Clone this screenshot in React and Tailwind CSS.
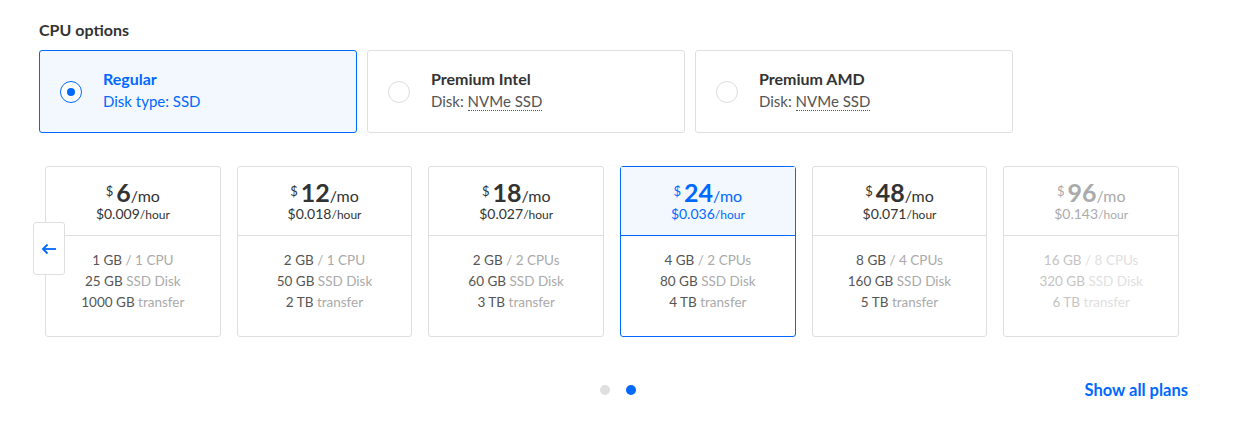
import { useState } from 'react';

const CPU_OPTIONS = [
  { id: 'regular', title: 'Regular', label: 'Disk type:', disk: 'SSD' },
  { id: 'intel', title: 'Premium Intel', label: 'Disk:', disk: 'NVMe SSD' },
  { id: 'amd', title: 'Premium AMD', label: 'Disk:', disk: 'NVMe SSD' },
];

const PLANS = [
  { price: '6', hour: '0.009', ram: '1 GB', cpu: '1 CPU', disk: '25 GB', transfer: '1000 GB' },
  { price: '12', hour: '0.018', ram: '2 GB', cpu: '1 CPU', disk: '50 GB', transfer: '2 TB' },
  { price: '18', hour: '0.027', ram: '2 GB', cpu: '2 CPUs', disk: '60 GB', transfer: '3 TB' },
  { price: '24', hour: '0.036', ram: '4 GB', cpu: '2 CPUs', disk: '80 GB', transfer: '4 TB' },
  { price: '48', hour: '0.071', ram: '8 GB', cpu: '4 CPUs', disk: '160 GB', transfer: '5 TB' },
  { price: '96', hour: '0.143', ram: '16 GB', cpu: '8 CPUs', disk: '320 GB', transfer: '6 TB', disabled: true },
];

function CpuCard({ option, selected, onSelect }) {
  return (
    <button
      type="button"
      onClick={onSelect}
      className={`flex h-[83px] w-[318px] items-center rounded-[3px] border pl-[20px] text-left ${
        selected ? 'border-[#0069ff] bg-[#f3f8ff]' : 'border-[#dfdfdf] bg-white'
      }`}
    >
      <span
        className={`flex h-[22px] w-[22px] items-center justify-center rounded-full border ${
          selected ? 'border-[#0069ff] bg-white' : 'border-[#dcdcdc] bg-white'
        }`}
      >
        {selected && <span className="h-[8px] w-[8px] rounded-full bg-[#0069ff]" />}
      </span>
      <span className="-mt-[3px] ml-[21px] flex flex-col">
        <span className={`text-[16px] font-bold leading-[22px] ${selected ? 'text-[#0069ff]' : 'text-[#333]'}`}>
          {option.title}
        </span>
        <span className={`text-[15px] leading-[22px] ${selected ? 'text-[#0069ff]' : 'text-[#555]'}`}>
          {option.label}{' '}
          <span className={selected ? '' : 'border-b border-dotted border-[#555]'}>{option.disk}</span>
        </span>
      </span>
    </button>
  );
}

function PlanCard({ plan, selected }) {
  const main = plan.disabled ? 'text-[#aaa]' : selected ? 'text-[#0069ff]' : 'text-[#333]';
  const val = plan.disabled ? 'text-[#c4c4c4]' : 'text-[#555]';
  const lbl = plan.disabled ? 'text-[#e0e0e0]' : 'text-[#aaa]';
  return (
    <div
      className={`flex h-[171px] flex-col rounded-[3px] border ${
        selected ? 'border-[#0069ff]' : 'border-[#dfdfdf]'
      }`}
    >
      <div
        className={`flex h-[69px] flex-col items-center justify-center border-b pt-[1px] ${
          selected ? 'border-[#0069ff] bg-[#f3f8ff]' : 'border-[#dfdfdf]'
        } ${main}`}
      >
        <div className="flex items-baseline leading-none">
          <span className="relative -top-[6px] mr-[3px] text-[13px]">$</span>
          <span className="text-[25px] font-bold">{plan.price}</span>
          <span className="text-[16px]">/mo</span>
        </div>
        <div className="mt-[1px] text-[14px] leading-[16px]">
          ${plan.hour}
          <span className="text-[12px]">/hour</span>
        </div>
      </div>
      <div className="flex flex-1 flex-col items-center pt-[14px] text-[13.5px] leading-[21px]">
        <div>
          <span className={val}>{plan.ram}</span> <span className={lbl}>/ {plan.cpu}</span>
        </div>
        <div>
          <span className={val}>{plan.disk}</span> <span className={lbl}>SSD Disk</span>
        </div>
        <div>
          <span className={val}>{plan.transfer}</span> <span className={lbl}>transfer</span>
        </div>
      </div>
    </div>
  );
}

export default function App() {
  const [cpu, setCpu] = useState('regular');

  return (
    <div className="min-h-[432px] bg-white pl-[39px] pt-[20px] font-['Lato',sans-serif]">
      <h2 className="text-[16px] font-bold leading-[20px] text-[#333]">CPU options</h2>

      <div className="mt-[10px] flex gap-[10px]">
        {CPU_OPTIONS.map((opt) => (
          <CpuCard key={opt.id} option={opt} selected={cpu === opt.id} onSelect={() => setCpu(opt.id)} />
        ))}
      </div>

      <div className="relative mt-[33px] ml-[6px] w-[1134px]">
        <div className="grid grid-cols-6 gap-[16px]">
          {PLANS.map((plan) => (
            <PlanCard key={plan.price} plan={plan} selected={plan.price === '24'} />
          ))}
        </div>
        {/* prev arrow */}
        <button
          type="button"
          className="absolute left-[-12px] top-[56px] flex h-[53px] w-[32px] items-center justify-center rounded-[3px] border border-[#dfdfdf] bg-white text-[#0069ff]"
        >
          <svg width="16" height="12" viewBox="0 0 16 12" fill="none" stroke="currentColor" strokeWidth="1.8">
            <path d="M15 6H2" />
            <path d="M6.5 1.5 2 6l4.5 4.5" />
          </svg>
        </button>
      </div>

      <div className="relative mt-[43px] flex h-[20px] w-[1149px] items-center">
        <div className="absolute left-[561px] flex gap-[16px]">
          <span className="h-[10px] w-[10px] rounded-full bg-[#dfdfdf]" />
          <span className="h-[10px] w-[10px] rounded-full bg-[#0069ff]" />
        </div>
        <a className="ml-auto text-[16.5px] font-bold text-[#0069ff]" href="#">
          Show all plans
        </a>
      </div>
    </div>
  );
}
